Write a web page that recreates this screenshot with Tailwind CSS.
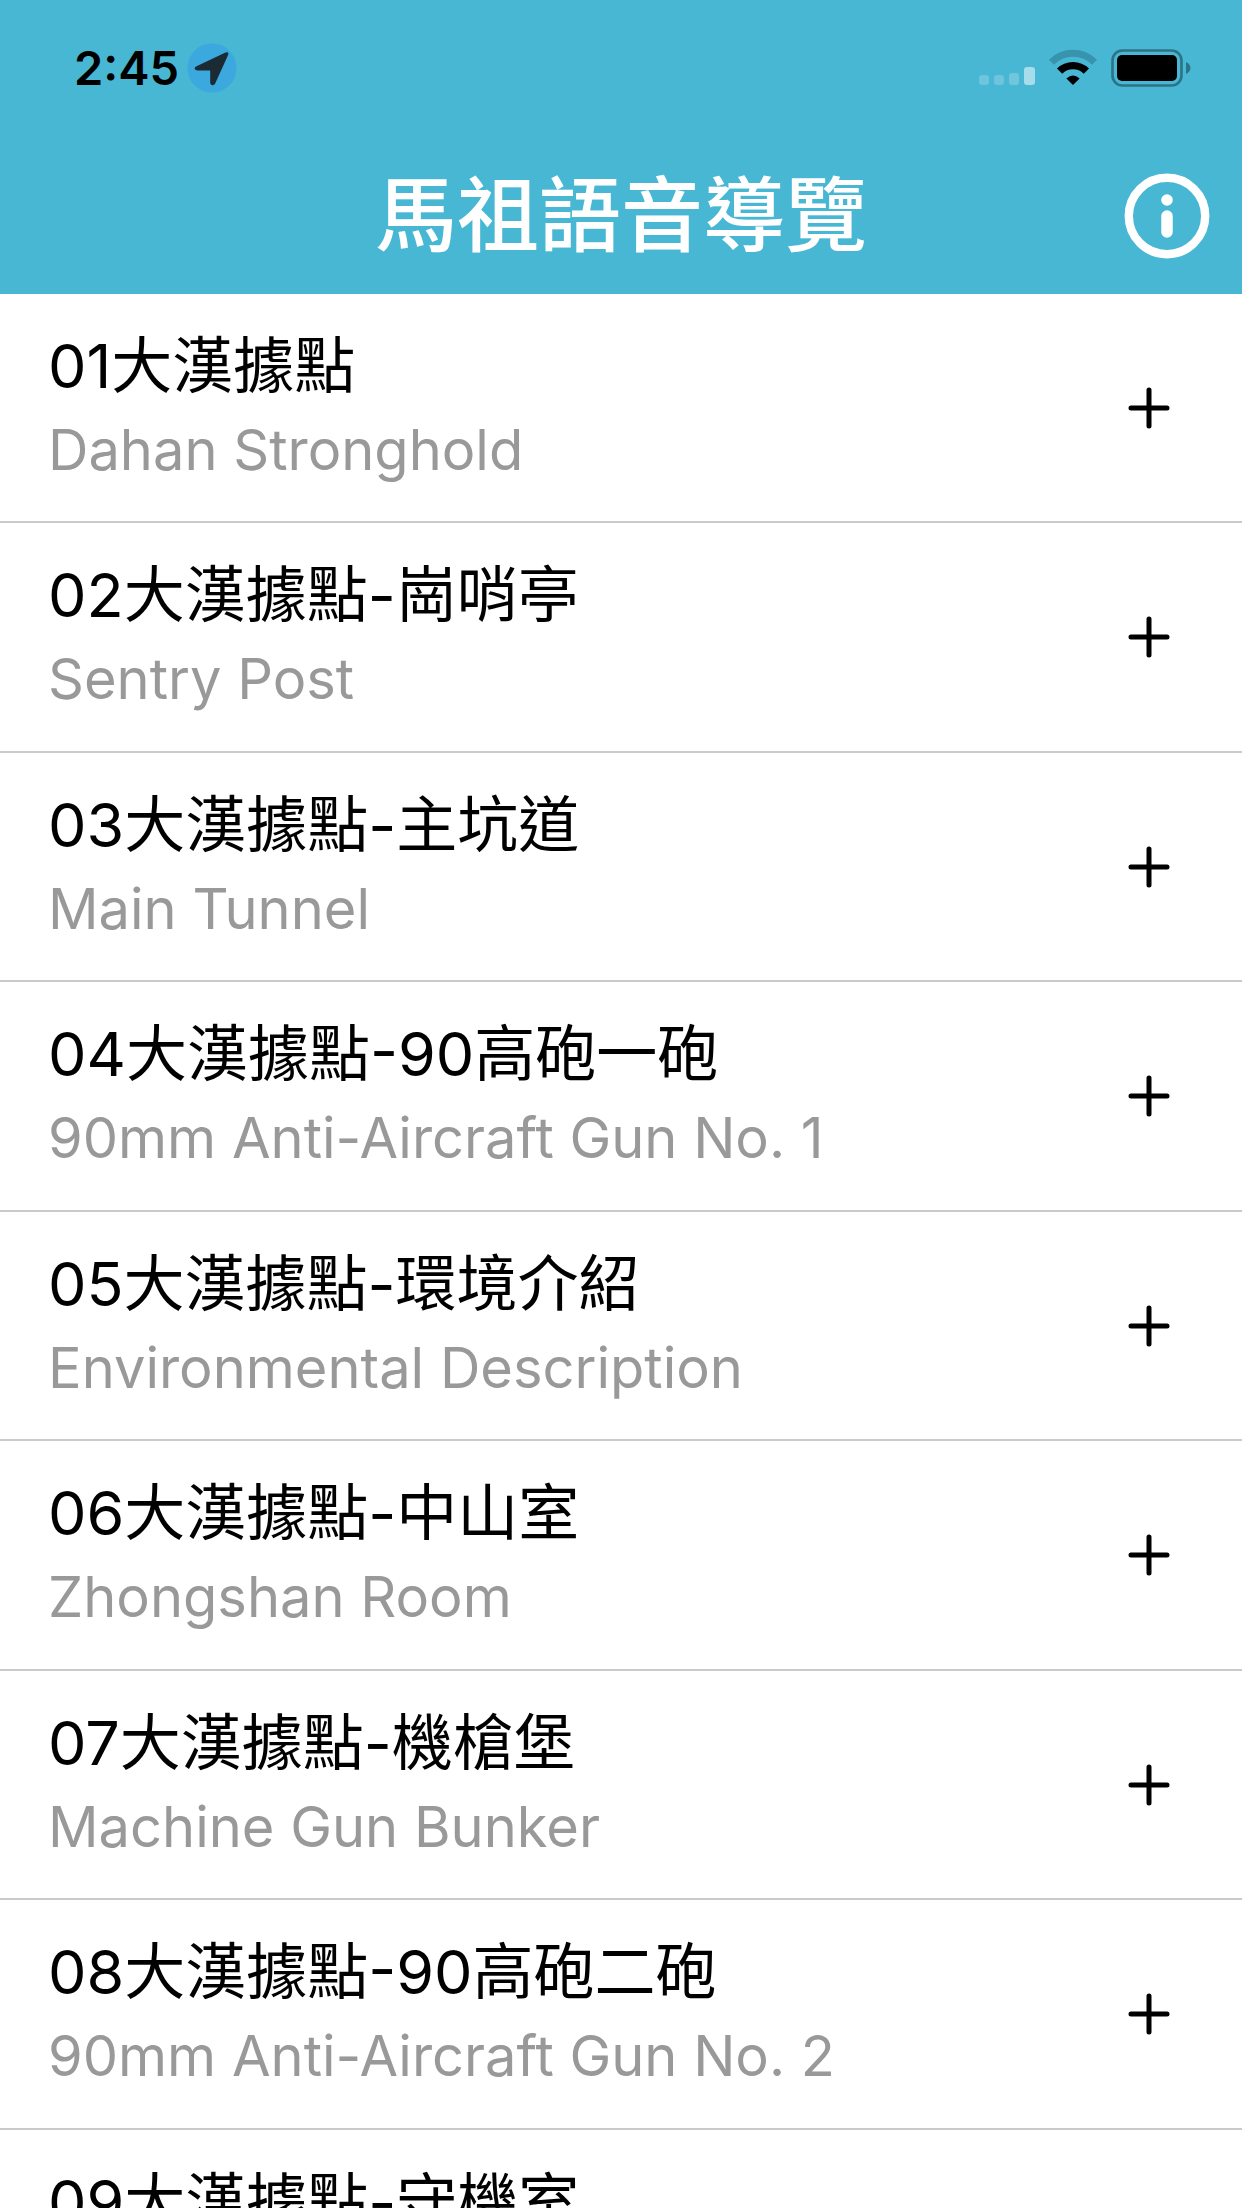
<!DOCTYPE html>
<html lang="zh-Hant">
<head>
    <meta charset="UTF-8"/>
    <meta name="viewport" content="width=device-width, initial-scale=1.0"/>
    <title>馬祖語音導覽</title>
    <script src="https://cdn.jsdelivr.net/npm/@tailwindcss/browser@4"></script>
</head>
<body class="h-screen flex flex-col overflow-hidden bg-white text-black font-['Inter','Noto_Sans_CJK_TC',sans-serif]">
<header class="shrink-0 bg-[#48b7d4]">
    <!-- Status bar -->
    <div class="flex items-center justify-between h-[136px] pl-[74px] pr-[51px]">
        <div class="flex items-center gap-2">
            <span class="text-[47px] leading-[56px] font-semibold">2:45</span>
            <svg class="w-[50px] h-[50px]" viewBox="0 0 50 50" aria-hidden="true">
                <circle cx="25" cy="25" r="24.5" fill="#3ba9dd"/>
                <path d="M9 23.4 38.5 9.6 Q42.4 8.4 41 12.2 L28.2 40.6 Q26.8 43 24.6 42 Q23.2 41.2 23.2 39.5 L23.2 27.4 10.4 27.4 Q7.6 27 7.6 25.4 Q7.6 24.2 9 23.4Z" fill="#1a2b33"/>
            </svg>
        </div>
        <div class="flex items-center">
            <svg class="w-[56px] h-[38px]" viewBox="0 0 56 38" fill="#fff" aria-hidden="true">
                <rect x="0" y="26" width="10" height="10" rx="3" opacity=".2"/>
                <rect x="15" y="26" width="10" height="10" rx="3" opacity=".2"/>
                <rect x="30" y="24" width="10" height="12" rx="3" opacity=".22"/>
                <rect x="45" y="18" width="11" height="18" rx="3" opacity=".52"/>
            </svg>
            <svg class="w-[48px] h-[38px] ml-[14px]" viewBox="0 0 48 38" fill="none" aria-hidden="true">
                <path d="M2.4 13.2 A30.5 30.5 0 0 1 45.6 13.2" stroke="#3794ac" stroke-width="7"/>
                <path d="M10.6 22.2 A19 19 0 0 1 37.4 22.2" stroke="#000" stroke-width="7.4"/>
                <path d="M17.4 29.4 Q24 23.4 30.6 29.4 L24 36Z" fill="#000"/>
            </svg>
            <svg class="w-[80px] h-[38px] ml-[14px]" viewBox="0 0 80 38" fill="none" aria-hidden="true">
                <rect x="1.5" y="1.5" width="69" height="35" rx="10" stroke="#2c7386" stroke-width="2.6"/>
                <rect x="6" y="6" width="60" height="26" rx="5" fill="#000"/>
                <path d="M75 13 Q79.5 15.5 79.5 19 Q79.5 22.5 75 25Z" fill="#2c7386"/>
            </svg>
        </div>
    </div>

    <!-- Title bar -->
    <div class="grid grid-cols-[1fr_auto_1fr] items-center h-[158px] pt-[2px] px-8">
        <h1 class="col-start-2 text-[82px] leading-[120px] font-medium text-white">馬祖語音導覽</h1>
        <button type="button" aria-label="關於" class="justify-self-end">
            <svg class="w-[86px] h-[86px]" viewBox="0 0 86 86" fill="none" aria-hidden="true">
                <circle cx="43" cy="43" r="38.2" stroke="#fff" stroke-width="8.4"/>
                <circle cx="43" cy="27" r="5.8" fill="#fff"/>
                <path d="M43 43 V59" stroke="#fff" stroke-width="11.5" stroke-linecap="round"/>
            </svg>
        </button>
    </div>
</header>

<main class="flex-1 overflow-y-auto [scrollbar-width:none]">
    <ul class="guide-list"></ul>
</main>

<script>
    const guideList = document.querySelector(".guide-list");

    const guides = [
      { title: "01大漢據點", subtitle: "Dahan Stronghold" },
      { title: "02大漢據點-崗哨亭", subtitle: "Sentry Post" },
      { title: "03大漢據點-主坑道", subtitle: "Main Tunnel" },
      { title: "04大漢據點-90高砲一砲", subtitle: "90mm Anti-Aircraft Gun No. 1" },
      { title: "05大漢據點-環境介紹", subtitle: "Environmental Description" },
      { title: "06大漢據點-中山室", subtitle: "Zhongshan Room" },
      { title: "07大漢據點-機槍堡", subtitle: "Machine Gun Bunker" },
      { title: "08大漢據點-90高砲二砲", subtitle: "90mm Anti-Aircraft Gun No. 2" },
      { title: "09大漢據點-守機室", subtitle: "Operator Room" },
    ];

    // Render one row per audio guide stop
    guides.forEach((guide) => {
      const row = document.createElement("li");
      row.className =
        "flex items-center justify-between h-[229px] even:h-[230px] pl-12 pr-[69px] border-b-2 border-[#cacaca]";
      row.innerHTML = `
        <div>
          <div class="text-[61px] leading-[84px]">${guide.title}</div>
          <div class="text-[56px] leading-[84px] text-[#999]">${guide.subtitle}</div>
        </div>
        <button type="button" aria-label="展開 ${guide.title}">
          <svg class="w-12 h-12" viewBox="0 0 48 48" fill="none" stroke="#000" stroke-width="5" stroke-linecap="round" aria-hidden="true">
            <path d="M24 6 V42 M6 24 H42"/>
          </svg>
        </button>
      `;
      guideList.appendChild(row);
    });
</script>
</body>
</html>
